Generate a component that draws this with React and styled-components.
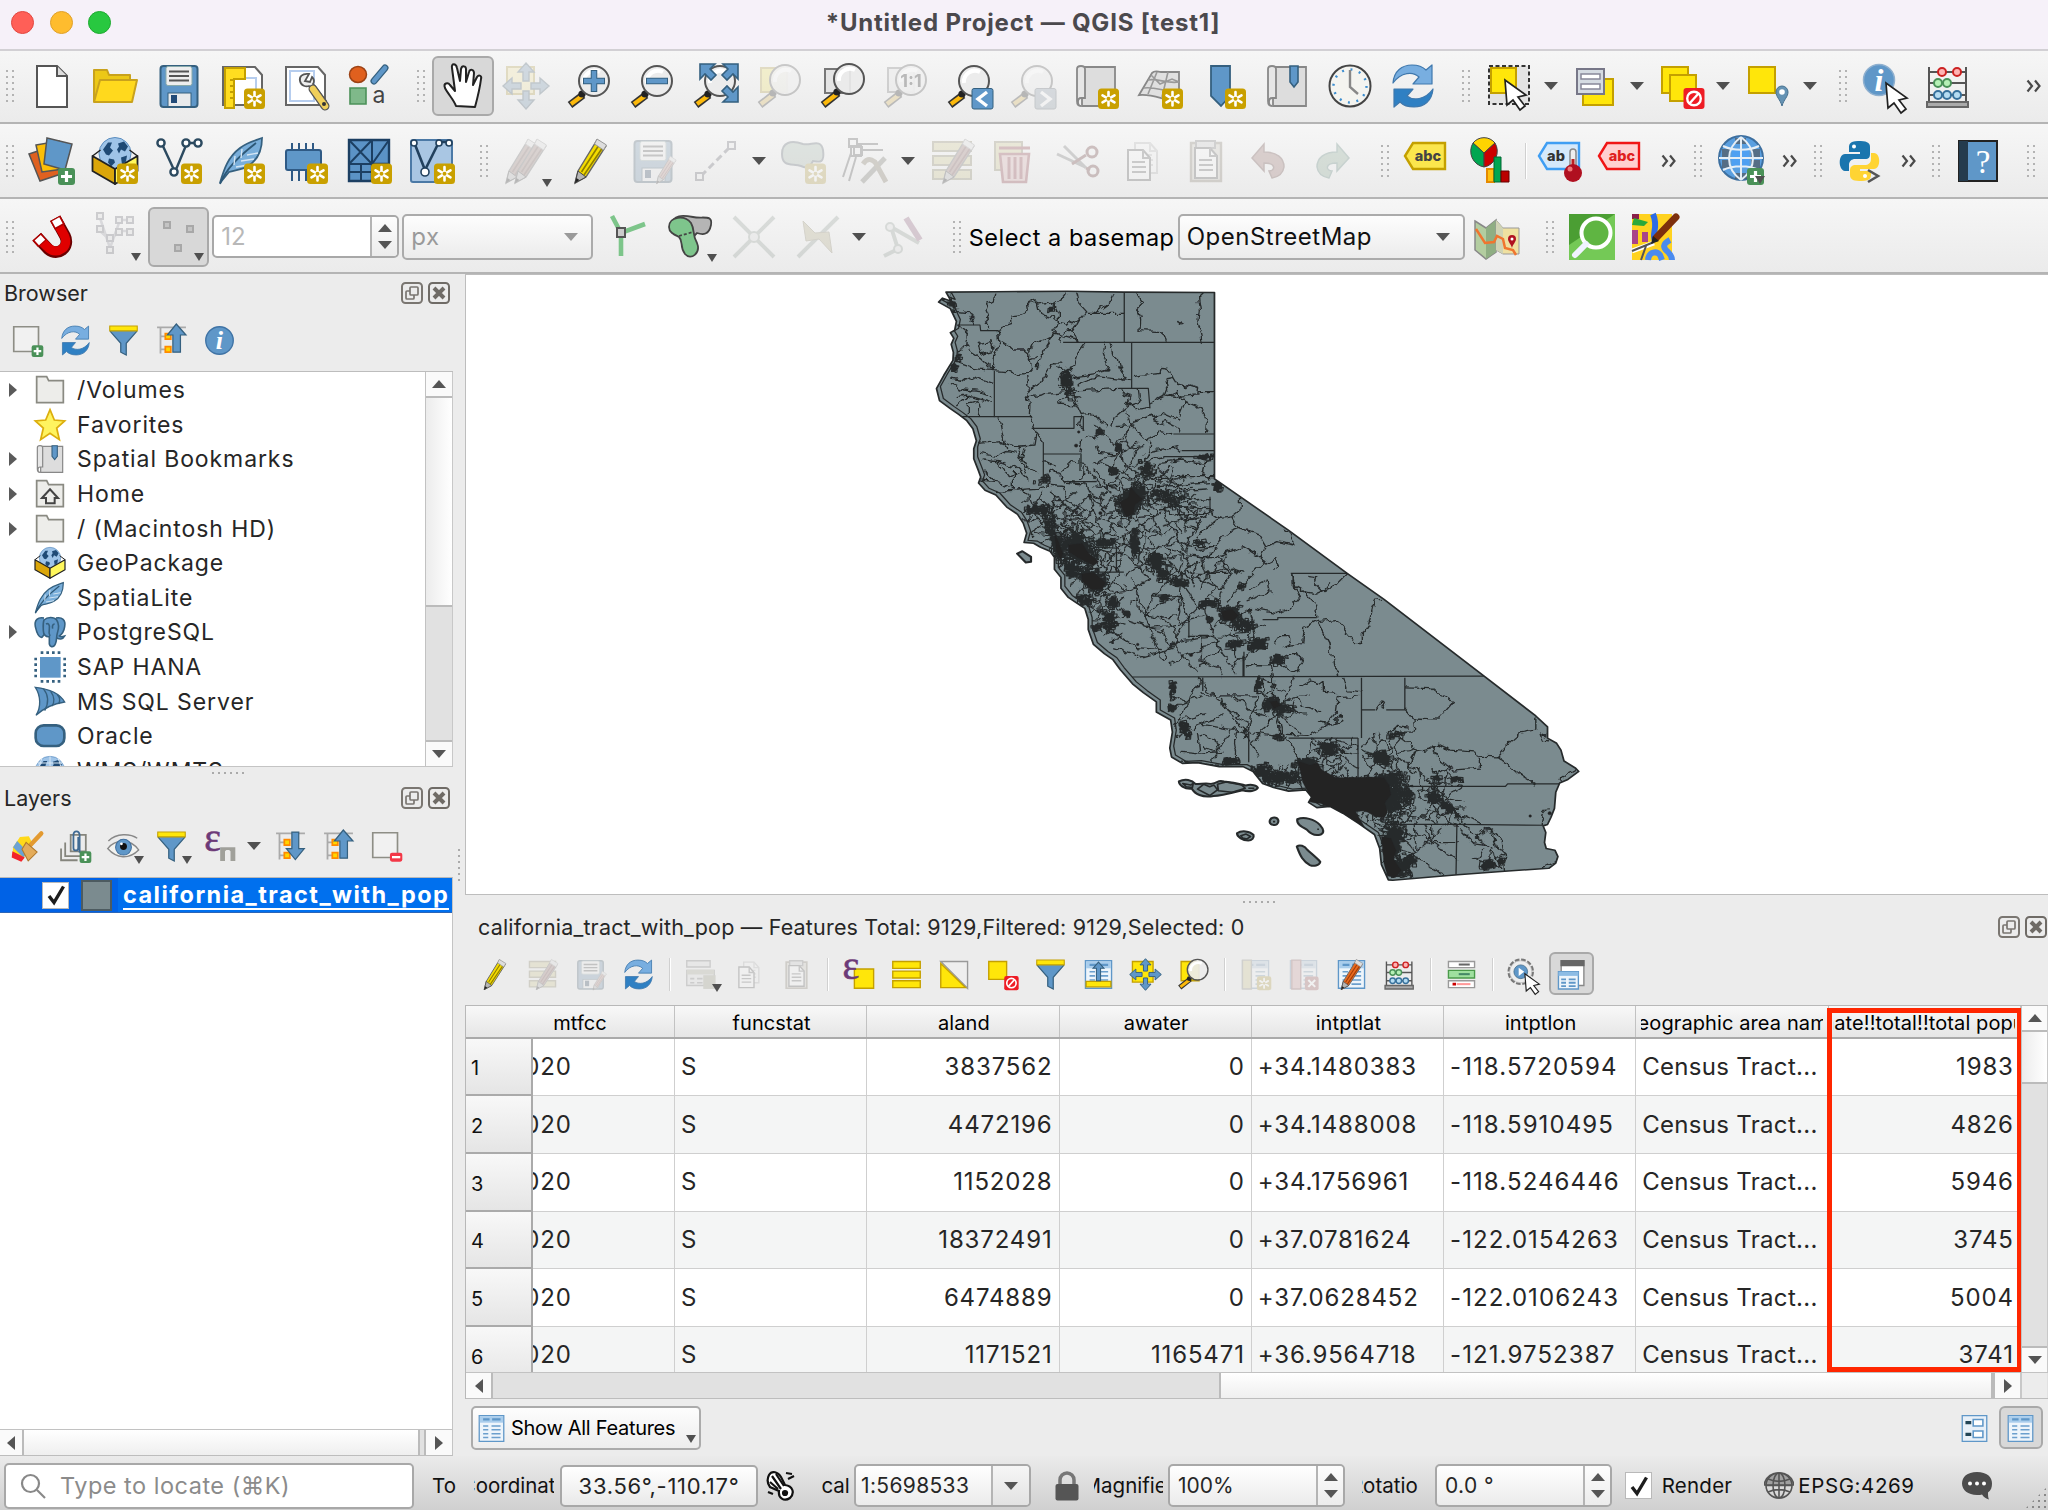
import React from "react";
import styled, { createGlobalStyle, css } from "styled-components";

const Global = createGlobalStyle`
  *{box-sizing:border-box}
  body{margin:0;background:#ececec;font-family:Inter,"Liberation Sans",sans-serif;color:#262626;overflow:hidden}
`;

/* ---------- layout ---------- */
const Window = styled.div`width:2048px;height:1510px;display:flex;flex-direction:column;background:#ececec;overflow:hidden`;
const TitleBar = styled.div`height:51px;flex:none;background:#f6f1f9;border-bottom:2px solid #d2d0d4;display:grid;grid-template-columns:1fr auto 1fr;align-items:center;padding:0 11px 5px`;
const Lights = styled.div`display:flex;gap:15.5px`;
const Light = styled.i`width:23px;height:23px;border-radius:50%;background:${p => p.$c};border:1px solid ${p => p.$b}`;
const Title = styled.div`font-weight:700;font-size:24px;letter-spacing:.8px;color:#4b494d;white-space:nowrap;transform:translateX(-1px)`;
const Bar = styled.div`height:${p => p.$h}px;flex:none;display:flex;align-items:center;background:linear-gradient(#f6f6f6,#ebebeb);border-bottom:2px solid #b4b4b4;white-space:nowrap;padding-bottom:${p => p.$pb || 0}px;padding-top:${p => p.$pt || 0}px`;
const Grip = styled.i`flex:none;margin-left:${p => p.$ml || 0}px;width:${p => p.$w || 21}px;height:36px;display:grid;justify-content:center;
  &::before{content:"";width:12px;height:36px;background:radial-gradient(circle,#b3b3b3 1px,transparent 1.5px) 0 0/6px 6px}`;
const Tool = styled.div`flex:none;width:${p => p.$w || 63.35}px;height:60px;display:grid;place-items:center;position:relative;
  svg{overflow:visible;${p => p.$dim && css`opacity:.27;filter:grayscale(.45)`}}
  ${p => p.$on && css`&::before{content:"";position:absolute;inset:0 ${p.$small ? "1.5px 1.5px" : "1px"};z-index:0;border:2px solid #a9a9a9;border-radius:6px;background:#d8d8d8}svg{z-index:1}`}
  ${p => p.$small && css`height:45px`}`;
const Corner = styled.i`position:absolute;right:${p => p.$r ?? 4}px;bottom:${p => p.$b ?? 4}px;border:5px solid transparent;border-top:8px solid #505050;border-bottom:0;z-index:2`;
const Drop = styled.i`flex:none;width:${p => p.$w || 23}px;padding-right:2px;display:grid;place-items:center;&::before{content:"";border:7px solid transparent;border-top:8px solid #505050;border-bottom:0}`;
const More = styled.div`flex:none;width:${p => p.$w}px;margin-left:${p => p.$auto ? "auto" : 0};display:grid;place-items:center`;
const VSep = styled.i`flex:none;width:2px;height:${p => p.$h}px;margin:0 ${p => p.$m}px;background:#fff;border-left:1px solid #d0d0d0`;
const Spin = styled.div`flex:none;width:${p => p.$w}px;height:43px;margin-left:${p => p.$ml || 0}px;border:2px solid #a8a8a8;border-radius:5px;background:${p => p.$plain ? "#fff" : "linear-gradient(#fff,#ebebeb)"};display:flex;font-size:${p => p.$fs || 21}px;color:${p => p.$c || "#262626"};align-items:center;padding-left:${p => p.$pl ?? 8}px;letter-spacing:${p => p.$ls || 0}px;white-space:nowrap`;
const SpinButtons = styled.div`margin-left:auto;height:100%;width:${p => p.$w || 27}px;flex:none;border-left:2px solid #b4b4b4;background:linear-gradient(#fdfdfd,#ececec);display:flex;flex-direction:column;align-items:center;justify-content:center;gap:9px;border-radius:0 4px 4px 0;
  &::before{content:"";border:7px solid transparent;border-bottom:8px solid #555;border-top:0}
  &::after{content:"";border:7px solid transparent;border-top:8px solid #555;border-bottom:0}`;
const ScaleDrop = styled.div`margin-left:auto;height:100%;width:38px;flex:none;border-left:2px solid #b4b4b4;display:grid;place-items:center;background:linear-gradient(#f6f6f6,#e2e2e2);border-radius:0 4px 4px 0;
  &::before{content:"";border:7px solid transparent;border-top:8px solid #555;border-bottom:0}`;
const Combo = styled.div`flex:none;width:${p => p.$w}px;height:46px;margin-left:${p => p.$ml || 0}px;border:2px solid #ababab;border-radius:5px;background:linear-gradient(#fdfdfd,#ececec);display:flex;align-items:center;justify-content:space-between;padding:0 13px 0 7px;font-size:24px;letter-spacing:.5px;color:${p => p.$c || "#111"};
  &::after{content:"";border:7px solid transparent;border-top:8px solid ${p => p.$c || "#555"};border-bottom:0}`;
const BarLabel = styled.div`flex:none;width:208px;padding:2px 0 0 1px;font-size:23.500px;letter-spacing:.5px;color:#000`;

const Body = styled.div`height:1182px;flex:none;display:flex`;
const Left = styled.div`width:453px;flex:none;display:flex;flex-direction:column`;
const VSplit = styled.div`width:12px;flex:none;display:flex;align-items:center;justify-content:center;
  &::before{content:"";width:4px;height:36px;background:radial-gradient(circle,#aaa 1px,transparent 1.5px) 0 0/4px 6px}`;
const HSplit = styled.div`height:${p => p.$h}px;flex:none;display:grid;place-items:center;padding-left:${p => p.$pl || 0}px;
  &::before{content:"";width:36px;height:4px;background:radial-gradient(circle,#aaa 1px,transparent 1.5px) 0 0/6px 4px}`;
const Right = styled.div`flex:1;min-width:0;display:flex;flex-direction:column`;
const DockHead = styled.div`height:${p => p.$h}px;flex:none;display:flex;align-items:center;justify-content:space-between;padding:0 ${p => p.$pr}px 1px ${p => p.$pl}px;font-size:21.5px;letter-spacing:${p => p.$ls || 0}px`;
const DockBtns = styled.div`display:flex;gap:5px`;
const SmallBar = styled.div`height:${p => p.$h}px;flex:none;display:flex;align-items:center;padding:0 0 3px ${p => p.$pl}px`;
const TreeBox = styled.div`flex:none;height:396px;border-top:1.5px solid #bdbdbd;border-bottom:1.5px solid #c4c4c4;display:flex;background:#fff;overflow:hidden`;
const Tree = styled.div`flex:1;padding-top:1px`;
const Row = styled.div`height:34.6px;display:flex;align-items:center;font-size:23px;letter-spacing:${p => p.$ls ?? .9}px;white-space:nowrap;
  svg{flex:none;overflow:visible;margin-right:11px}`;
const Tri = styled.i`flex:none;width:34px;padding-left:9px;&::before{content:"";display:${p => p.$show ? "block" : "none"};width:0;border:7px solid transparent;border-left:8px solid #5a5a5a;border-right:0}`;
const VScroll = styled.div`width:${p => p.$w || 28}px;flex:none;display:flex;flex-direction:column;border-left:1.5px solid #c2c2c2;border-right:1.5px solid #c8c8c8;background:#e1e1e1`;
const HScroll = styled.div`height:27px;flex:none;display:flex;border-top:1.5px solid #c2c2c2;border-bottom:1.5px solid #bdbdbd;background:#e1e1e1;border-right:${p => p.$br ? "1.5px solid #c4c4c4" : 0}`;
const ScrollBtn = styled.i`flex:none;${p => p.$v ? "height:26px" : css`width:${p.$w || 27}px`};display:grid;place-items:center;background:#fafafa;border:0 solid #bbb;
  ${p => ({ up: "border-bottom-width:2px", down: "border-top-width:2px", left: "border-right-width:2px", right: "border-left-width:2px" }[p.$d])};
  &::before{content:"";border:7px solid transparent;
  ${p => ({ up: "border-bottom:8px solid #555;border-top:0", down: "border-top:8px solid #555;border-bottom:0", left: "border-right:8px solid #555;border-left:0", right: "border-left:8px solid #555;border-right:0" }[p.$d])}}`;
const Handle = styled.i`flex:none;${p => p.$v ? `height:${p.$s}px;border-bottom:2px solid #bbb;background:linear-gradient(90deg,#ececec,#fff)` : `width:${p.$s}px;border-right:2px solid #bbb;background:${p.$trough ? "#e1e1e1" : "linear-gradient(#fff,#efefef)"}`}`;
const ScrollCorner = styled.i`width:27px;flex:none;background:#ececec;border-left:2px solid #c8c8c8`;
const Space = styled.i`flex:1`;
const LayerTree = styled.div`flex:1;border-top:1.5px solid #b9b9b9;border-right:1.5px solid #c4c4c4;background:#fff`;
const LayerRow = styled.div`height:35px;background:linear-gradient(90deg,#0062e6 118px,#0070ee 118px);border-bottom:1px solid #2a65b8;display:flex;align-items:center;padding-left:42px;color:#fff;font-weight:700;font-size:23.500px;letter-spacing:1.450px;overflow:hidden;white-space:nowrap`;
const Check = styled.i`flex:none;width:27px;height:27px;background:#fff;border:1.5px solid #b9b9b9;display:grid;place-items:center`;
const Swatch = styled.i`width:31px;height:31px;flex:none;background:#7b8b8f;border:2px solid #4d5b60;margin:0 11px 0 12px`;
const LayerName = styled.span`border-bottom:2px solid #fff;line-height:26px;padding-top:2px`;
const MapCanvas = styled.div`height:621px;flex:none;background:#fff;border:1.5px solid #bdbdbd;border-right:0;padding:0 0 0 454px;overflow:hidden;svg{display:block;margin-top:-5px}`;

const Table = styled.div`height:394px;flex:none;display:flex;flex-direction:column;border-top:1.5px solid #b8b8b8;border-left:1.5px solid #b8b8b8`;
const TableMid = styled.div`flex:1;min-height:0;display:flex`;
const GridArea = styled.div`flex:1;overflow:hidden;position:relative`;
const Highlight = styled.div`position:absolute;right:-1px;bottom:0;top:2px;width:195px;border:5px solid #ff2600`;
const HeadRow = styled.div`display:flex;height:32.5px;background:linear-gradient(#f8f8f8,#e6e6e6);border-bottom:2.5px solid #aaa`;
const HeadCell = styled.div`width:${p => p.$w || 192.25}px;flex:none;border-right:1.5px solid #c2c2c2;display:flex;justify-content:center;align-items:center;overflow:hidden;white-space:nowrap;font-size:20px;letter-spacing:.1px;color:#000;padding:4px 0 0 ${p => p.$pl || 0}px;margin:0`;
const HeadClip = styled.div`width:182px;overflow:hidden;display:flex;justify-content:center;padding-left:${p => p.$pl || 0}px;letter-spacing:${p => p.$ls || 0}px`;
const DataRow = styled.div`display:flex;height:57.7px;background:${p => p.$alt ? "#f4f5f5" : "#fff"}`;
const RowHead = styled.div`width:67px;flex:none;background:linear-gradient(#f8f8f8,#e5e5e5);border-right:2px solid #aaa;border-bottom:2.5px solid #aaa;padding:4px 0 0 5px;display:flex;align-items:center;font-size:20px;color:#111`;
const Cell = styled.div`width:${p => p.$w || 192.25}px;flex:none;border-right:1.5px solid #cfcfcf;border-bottom:1.5px solid #cfcfcf;padding:0 ${p => p.$r ? 6 : 0}px 1px 6px;display:flex;align-items:center;justify-content:${p => p.$r ? "flex-end" : "flex-start"};overflow:hidden;white-space:nowrap;font-size:24px;letter-spacing:${p => p.$ls ?? .85}px`;
const Pulled = styled.span`margin-left:-49px`;
const Footer = styled.div`height:57px;flex:none;display:flex;align-items:center;padding:1px 4px 0 6px`;
const ShowBtn = styled.div`position:relative;width:230px;height:44px;border:2px solid #ababab;border-radius:5px;background:linear-gradient(#fdfdfd,#ededed);display:flex;align-items:center;gap:4px;padding-left:3px;font-size:20px;letter-spacing:-.3px;color:#000;white-space:nowrap;svg{flex:none}`;

const Status = styled.div`flex:1;display:flex;align-items:center;background:linear-gradient(#ebebeb,#d0d0d0);padding:5px 0 0 4px;font-size:20.5px;color:#222;white-space:nowrap`;
const Search = styled.div`width:410px;height:46px;flex:none;border:2px solid #a8a8a8;border-radius:5px;background:#fff;display:flex;align-items:center;gap:14px;padding-left:14px;font-size:23.500px;color:#8b8b8b;letter-spacing:.5px`;
const Clip = styled.div`flex:none;width:${p => p.$w}px;margin-left:${p => p.$ml}px;overflow:hidden;display:flex;justify-content:center;letter-spacing:${p => p.$ls || 0}px;color:#111`;
const Field = styled.div`flex:none;width:198px;height:42px;margin-left:6px;border:2px solid #a8a8a8;border-radius:5px;background:linear-gradient(#fff,#e9e9e9);display:grid;place-items:center;font-size:22px;letter-spacing:.7px`;
const Spot = styled.div`flex:none;width:${p => p.$w}px;margin-left:${p => p.$ml}px;display:grid;place-items:center`;
const SizeGrip = styled.i`align-self:flex-end;margin-left:auto;width:24px;height:24px;background:radial-gradient(circle,#888 1px,transparent 1.5px) 0 0/6px 6px;clip-path:polygon(100% 0,100% 100%,0 100%)`;

/* ---------- icon pieces ---------- */
const Y = "#ffe60a", YB = "#c4a000", B = "#5f97c8", BD = "#35607f";
const T = (p) => <text fontFamily="Inter,sans-serif" textAnchor="middle" {...p} />;
const StarBadge = () => <g><rect x="26" y="26.5" width="21" height="20.5" rx="3.5" fill="#c9a000" stroke="none" /><path d="M36.5 30v13.500M30.500 33.300l12 7M42.500 33.300l-12 7" stroke="#fff" strokeWidth="2.600" strokeLinecap="round" /><circle cx="36.500" cy="36.800" r="2" fill="#c9a000" stroke="none" /></g>;
const PlusBadge = () => <g><rect x="30" y="31" width="17" height="17" rx="3" fill="#4a9158" /><path d="M38.500 34v11M33 39.500h11" stroke="#fff" strokeWidth="3.200" /></g>;
const NoBadge = () => <g><rect x="26.500" y="26" width="21" height="21" rx="3" fill="#ee1c25" stroke="none" /><circle cx="37" cy="36.500" r="6.800" fill="none" stroke="#fff" strokeWidth="2.400" /><path d="M32.500 41.500l9-10" stroke="#fff" strokeWidth="2.400" /></g>;
const Lens = ({ x = 28, y = 19 }) => <g><path d={`M4 43L${x - 11} ${y + 14}`} stroke="#333" strokeWidth="7.500" /><path d={`M5 42L${x - 12} ${y + 15}`} stroke="#fcb90b" strokeWidth="4.200" /><circle cx={x - 12} cy={y + 13} r="3.600" fill="#222" /><circle cx={x} cy={y} r="15" fill="#ebeceb" fillOpacity=".92" stroke="#555" strokeWidth="2" /><path d={`M${x - 10} ${y + 2}a11 11 0 0 1 16-11`} stroke="#fff" strokeWidth="4" fill="none" /></g>;
const Pencil = ({ c = "#f4dc00", d = "#8f7d00", dx = 0 }) => <g transform={`translate(${dx} 0)`}><path d="M9 46l3-12L31 3l9 6-20 31z" fill={c} stroke="#666" strokeWidth="1.400" /><path d="M15.500 35L33 8M18 38L37 10" stroke={d} strokeWidth="1.600" /><path d="M28.500 7L31 2l9.500 6-3 5z" fill="#ddd" stroke="#999" /><path d="M9 46l3-12 8 6z" fill="#b5b5b5" stroke="#444" /><path d="M9 46l1.400-5 3 2z" fill="#222" /></g>;
const Floppy = () => <g><rect x="5.500" y="4" width="37" height="41" rx="3" fill={B} stroke={BD} strokeWidth="2" /><rect x="11" y="4.500" width="26" height="19" rx="2" fill="#eee" stroke="#8aa" /><path d="M14 9.500h20M14 14h20M14 18.500h20" stroke="#555" strokeWidth="2" /><rect x="13" y="31" width="23" height="13.500" fill="#e8eaec" stroke={BD} /><path d="M16 33h6v8h-6z" fill="#224b78" /></g>;
const Cursor = ({ x = 0, y = 0 }) => <path transform={`translate(${x} ${y})`} d="M0 0l2 25 6-5 7 10 5-4-7-9 8-2z" fill="#fff" stroke="#222" strokeWidth="1.700" />;
const Paper = ({ c = "#666" }) => <path d="M5 5h32l7 8v30H5z" fill="#fff" stroke={c} strokeWidth="2" />;
const FourArrows = ({ c = B, k = BD }) => <g fill={c} stroke={k} strokeWidth="1.400"><path d="M24 1l8 9h-5v9h-6v-9h-5zM24 47l8-9h-5v-9h-6v9h-5zM1 24l9-8v5h9v6h-9v5zM47 24l-9-8v5h-9v6h9v5z" /></g>;
const Sheet = ({ x, y }) => <g transform={`translate(${x} ${y})`}><path d="M0 0h15l7 8v22H0z" fill="#fafafa" stroke="#555" strokeWidth="2" /><path d="M15 0v8h7M4 12h13M4 17h14M4 22h14" fill="none" stroke="#666" strokeWidth="2" /></g>;
const Globe = ({ cx, cy, r }) => <g><circle cx={cx} cy={cy} r={r} fill="#9fc4e8" stroke="#5b8dbf" /><g transform={`translate(${cx} ${cy}) scale(${r / 16})`} fill="#1f4a75"><path d="M-12-4l5-7 4 0-2 5 3 3-4 5-3-1zM-6 5l5 1 1 3-4 4-3-4zM3-10l6-2 4 5-3 5-4-2-2 4-2-4 2-3zM6 4l6-2-1 6-4 3z" /></g></g>;
const Box3D = () => <g strokeLinejoin="round"><Globe cx={24} cy={16.500} r={16} /><path d="M1.500 19L24 32v15L1.500 34z" fill="#dba60a" stroke="#222" strokeWidth="1.800" /><path d="M46.500 19L24 32v15l22.500-13z" fill="#fff75c" stroke="#222" strokeWidth="1.800" /><path d="M1.500 19l8-6M46.500 19l-8-6" stroke="#222" strokeWidth="1.500" /></g>;
const Feather = () => <g><path d="M2 46C6 32 10 20 22 11 30 5 36 4 44 1c0 12-4 22-14 28-6 4-14 4-19 6z" fill="#79aeda" stroke={BD} strokeWidth="1.800" /><path d="M2 47C8 32 20 20 38 6" stroke="#2d5877" strokeWidth="1.800" fill="none" /><path d="M18 30l12-2M23 24l13-2M29 18l11-2M17 19l-1 9M24 12l-1 9" stroke="#d5e6f4" strokeWidth="1.400" fill="none" /></g>;
const VShape = () => <g fill="#fff" stroke="#2c4a60" strokeWidth="2.400"><path d="M7 7l13 28L32 6h11" fill="none" /><circle cx="6" cy="6" r="3.600" /><circle cx="31" cy="6" r="3.600" /><circle cx="43" cy="6" r="3.600" /><circle cx="19" cy="35" r="3.600" /></g>;
const Funnel = () => <g><path d="M5 6h38v5L28 28v17l-8-4V28L5 11z" fill={B} stroke={BD} strokeWidth="1.800" /><path d="M4 3h40v7H4z" fill={Y} stroke={YB} strokeWidth="1.500" /></g>;
const TreeLines = ({ down }) => <g><path d="M3 5h42M8 5v38M8 18h10M8 37h10" stroke="#aaa" strokeWidth="2.600" fill="none" /><path d="M15 14h8v8h-8zM15 33h8v8h-8z" fill="#ffd600" stroke="#ff8a00" strokeWidth="2.500" />{down ? <path d="M26 3h10v24h8L31 43 18 27h8z" fill={B} stroke={BD} strokeWidth="1.800" /> : <path d="M31 0l14 16h-8v25h-11V16h-8z" fill={B} stroke={BD} strokeWidth="1.800" />}</g>;
const GridSheet = () => <g><path d="M5 4h38v40H5z" fill="#eef5fb" stroke={B} strokeWidth="2" /><path d="M6 5h36v10H6z" fill="#a9cdec" /><path d="M11 10h10M25 10h13" stroke={B} strokeWidth="3.600" /><path d="M11 20h8M24 20h14M11 26h8M24 26h14M11 32h8M24 32h14M11 38h8M24 38h14" stroke="#6b9fcd" strokeWidth="2.400" /></g>;
const TableRows = () => <g fill="#d8cb66" stroke="#8f8650" strokeWidth="2"><path d="M5 5h38v9H5zM5 19h38v9H5zM5 33h38v9H5z" /></g>;
const MapRoll = () => <g><path d="M8 5h35v39H10V10z" fill="#ddd" stroke="#888" strokeWidth="1.800" /><path d="M5 7c0-4 8-4 8 0v29H9c-4 0-4 8 0 8-3 0-4-2-4-5z" fill="#e6e6e6" stroke="#888" strokeWidth="1.800" /></g>;
const LabelTag = ({ s, f, t, c, x = 26 }) => <g transform="translate(-1 0)"><path d="M3 19L11 6h32v26H11z" fill={f} stroke={s} strokeWidth="2.400" /><T x={x} y="24" fontSize="14.500" fontWeight="800" fill={c}>{t}</T></g>;

const icons = {
  doc: <g fill="#fff" stroke="#555" strokeWidth="2"><path d="M9 4h20l10 10v31H9z" /><path d="M29 4v10h10" fill="#ddd" /></g>,
  folder: <g stroke="#c9a21c" strokeWidth="2" strokeLinejoin="round"><path d="M3 40V8h13l2 5h21v8" fill="#ecc817" /><path d="M3 40L9 18h37l-5 22z" fill="#ffd91d" /></g>,
  save: <Floppy />,
  newLayout: <g><Paper /><path d="M22 16h16v20" stroke="#b6cdee" strokeWidth="2" fill="none" /><path d="M7 6h20v11H16v29H7z" fill="#ffdd20" stroke={YB} strokeWidth="2" /><path d="M12 18h4M12 24h4M12 30h4M12 36h4" stroke={YB} strokeWidth="2" /><StarBadge /></g>,
  layoutMgr: <g><Paper /><path d="M9 9h24v30H9z" fill="none" stroke="#b6cdee" strokeWidth="2" /><path d="M28 12c-7-1-10 3-9 7 1 5 6 6 9 5l12 18c2 3 6 0 5-3L32 22c2-3 0-6-1-7l-2 5-5-1z" fill="#eee" stroke="#555" strokeWidth="1.800" /><path d="M32 27l12 17" stroke="#555" strokeWidth="9" strokeLinecap="round" /><path d="M32 27l12 17" stroke="#f0cf5b" strokeWidth="6.500" strokeLinecap="round" /><circle cx="43" cy="42" r="2" fill="#333" /></g>,
  style: <g><ellipse cx="13" cy="12.500" rx="8.500" ry="8" fill="#e0601e" stroke="#9c4215" strokeWidth="1.500" /><path d="M29 19L40 6" stroke={BD} strokeWidth="7" strokeLinecap="round" /><path d="M29 19L40 6" stroke={B} strokeWidth="4.500" strokeLinecap="round" /><path d="M5 26h16v16H5z" fill="#7fb98a" stroke="#4c9159" strokeWidth="1.600" /><T x="34" y="41" fontSize="23" fill="#444">a</T></g>,
  hand: <path d="M17 44c-2-6-8-12-11-18-2-5 3-6 5-3l5 6L13 6c-1-5 4-5 5 0l3 13 1-12c1-4 5-3 5 0v13l3-10c1-4 5-2 5 1l-1 12 4-8c2-3 5-1 4 2-1 8-3 17-6 28z" fill="#fff" stroke="#222" strokeWidth="2" strokeLinejoin="round" />,
  panSel: <g><path d="M5 5h27v27H5z" fill="#ffe66b" stroke={YB} strokeWidth="2" /><FourArrows /></g>,
  zoomIn: <g><Lens /><path d="M28 8v22M17 19h22" stroke={BD} strokeWidth="6.500" /><path d="M28 9v20M18 19h20" stroke={B} strokeWidth="4.600" /></g>,
  zoomOut: <g><Lens /><path d="M17 19h22" stroke={BD} strokeWidth="6.500" /><path d="M18 19h20" stroke={B} strokeWidth="4.600" /></g>,
  zoomFull: <g><Lens /><g fill={B} stroke={BD} strokeWidth="1.600"><path d="M8 2h15l-5 5 6 6-5 5-6-6-5 5zM46 2H31l5 5-6 6 5 5 6-6 5 5zM46 40H31l5-5-6-6 5-5 6 6 5-5z" /></g></g>,
  zoomSel: <g><path d="M5 6h26v24H5z" fill={Y} stroke={YB} strokeWidth="2" /><Lens x={29} y={18} /></g>,
  zoomLayer: <g><path d="M6 7h25v24H6z" fill="#e4e4e4" stroke="#777" strokeWidth="2" /><Lens x={30} y={17} /></g>,
  zoomNative: <g><path d="M6 6h26v24H6z" fill="#e4e4e4" stroke="#777" strokeWidth="2" /><Lens x={29} y={18} /><T x="29" y="25" fontSize="18" fontWeight="700" fill="#222">1:1</T></g>,
  zoomLast: <g><Lens /><rect x="26" y="26.500" width="21" height="20.500" rx="2" fill={B} stroke={BD} /><path d="M41 30l-9 7 9 7" stroke="#fff" strokeWidth="3.400" fill="none" /></g>,
  zoomNext: <g><Lens /><rect x="26" y="26.500" width="21" height="20.500" rx="2" fill="#86a0b8" stroke="#567" /><path d="M32 30l9 7-9 7" stroke="#fff" strokeWidth="3.400" fill="none" /></g>,
  newMap: <g><MapRoll /><StarBadge /></g>,
  new3d: <g><path d="M3 33L16 11c3-3 6-1 9-1h18v29c-12 1-26-8-40-6z" fill="#e0e0e0" stroke="#888" strokeWidth="1.800" /><path d="M12 18c10-2 18 4 31 2M8 26c12-2 22 5 35 3M21 10l-9 22M32 10l-6 25M15 13l9 9 12-5 7 3" fill="none" stroke="#999" strokeWidth="1.600" /><StarBadge /></g>,
  newBm: <g><path d="M12 4h19v30l-9 10-10-10z" fill={B} stroke={BD} strokeWidth="1.800" /><StarBadge /></g>,
  bookmarks: <g><MapRoll /><path d="M27 4h8v16l-4 5-4-5z" fill={B} stroke={BD} strokeWidth="1.600" /></g>,
  clock: <g><circle cx="24" cy="24" r="20.500" fill="#f4f4f0" stroke="#444" strokeWidth="2" /><circle cx="24" cy="24" r="16.500" fill="none" stroke="#3f8fd0" strokeWidth="2.400" strokeDasharray="2 6.640" /><path d="M24 8v17l8 7" stroke="#888" strokeWidth="2.400" fill="none" /></g>,
  refresh: <g stroke="#3f78ad" strokeWidth="1.200" strokeLinejoin="round"><path d="M4 21C5 9 13 3 23 3c7 0 11 2 14 5l6-5v19H24l6-7C24 9 12 10 4 21z" fill="#78aee0" /><path d="M44 27c-1 12-9 18-19 18-7 0-11-2-14-5l-6 5V27h19l-6 7c6 5 18 4 26-7z" fill="#2f80c3" /></g>,
  select: <g><path d="M4 4h40v38H4z" fill="#e3e3e3" stroke="#333" strokeWidth="2" strokeDasharray="4 2.500" /><path d="M6 6h25v25H6z" fill={Y} stroke={YB} strokeWidth="2" /><Cursor x={20} y={18} /></g>,
  selForm: <g><path d="M12 17h30v26H12z" fill={Y} stroke={YB} strokeWidth="2" /><path d="M6 7h27v25H6z" fill="#d5dbe2" stroke="#778" strokeWidth="2" /><path d="M10 12h19v5H10zM10 22h19v5H10z" fill="#fff" stroke="#889" strokeWidth="1.500" /></g>,
  deselect: <g fill={Y} stroke={YB} strokeWidth="2"><path d="M5 5h26v26H5z" /><path d="M13 13h26v26H13z" /><NoBadge /></g>,
  selLoc: <g><path d="M5 5h26v26H5z" fill={Y} stroke={YB} strokeWidth="2" /><path d="M38 44c-2-7-6-9-6-14a6 6 0 0 1 12 0c0 5-4 7-6 14z" fill="#6593b4" stroke="#46708f" /><circle cx="38" cy="30" r="2.800" fill="#fff" /></g>,
  identify: <g><circle cx="18" cy="18" r="15.500" fill={B} stroke="#8fb0cf" strokeWidth="1.500" /><T x="18" y="29" fontSize="32" fontStyle="italic" fontWeight="700" fontFamily="Liberation Serif,serif" fill="#fff">i</T><Cursor x={25} y={21} /></g>,
  info: <g><circle cx="24" cy="24" r="20" fill={B} stroke="#3f73a5" strokeWidth="2" /><T x="24" y="37" fontSize="38" fontStyle="italic" fontWeight="700" fontFamily="Liberation Serif,serif" fill="#fff">i</T></g>,
  abacus: <g strokeWidth="2" stroke="#666"><path d="M5 5v37M42 5v37M5 10h37M5 21h37M5 33h37" stroke="#555" /><path d="M3 40h41v5H3z" fill="#aaa" /><g fill="#ffb3b3" stroke="#c22"><circle cx="18" cy="10" r="4" /><circle cx="33" cy="10" r="4" /></g><g fill="#b6f0b6" stroke="#4a9158"><circle cx="14" cy="21" r="4" /><circle cx="23" cy="21" r="4" /></g><g fill="#b5dcf2" stroke="#37719c"><circle cx="14" cy="33" r="4" /><circle cx="23" cy="33" r="4" /><circle cx="33" cy="33" r="4" /></g></g>,
  dsm: <g stroke="#555" strokeWidth="1.500"><path d="M1 17l21-7 11 27-21 7z" fill="#df6120" /><path d="M8 8l23-4 4 28-21 3z" fill="#fbbe07" /><path d="M19 1l25 6-7 26-21-6z" fill={B} /><g stroke="none"><PlusBadge /></g></g>,
  gpkg: <g><Box3D /><StarBadge /></g>,
  box: <Box3D />,
  shp: <g><VShape /><StarBadge /></g>,
  spatialite: <g><Feather /><StarBadge /></g>,
  feather: <Feather />,
  mem: <g><path d="M11 6v38M18 6v38M25 6v38M32 6v38" stroke="#2f5a85" strokeWidth="2" /><rect x="5" y="13" width="35" height="20" rx="2" fill={B} stroke="#2f5a85" strokeWidth="2" /><StarBadge /></g>,
  mesh: <g><path d="M4 3h40v24H27v17H4z" fill="#5b93c6" stroke="#1c3f62" strokeWidth="2.400" /><path d="M4 3l23 24M27 3L4 27M27 3v24L44 3M4 27h23M16 27v17M4 35h23" stroke="#1c3f62" strokeWidth="2" /><StarBadge /></g>,
  virt: <g><rect x="3" y="3" width="41" height="42" rx="2" fill="#a9c6e3" stroke="#4b79a6" strokeWidth="2" /><path d="M6 5l11 28L31 5h11" stroke="#22415e" strokeWidth="2.600" fill="none" /><g fill="#fff" stroke="#22415e" strokeWidth="1.600"><circle cx="6" cy="6" r="3" /><circle cx="31" cy="6" r="3" /><circle cx="41" cy="6" r="3" /><circle cx="17" cy="35" r="4" /></g><StarBadge /></g>,
  pencils: <g><Pencil dx={-5} c="#a8796e" d="#7d5048" /><Pencil dx={4} c="#a8796e" d="#7d5048" /></g>,
  pencil: <Pencil />,
  saveEdit: <g><Floppy /><g transform="translate(22 18) scale(.62)"><Pencil c="#d09080" d="#955" /></g></g>,
  digitize: <g fill="#eee" stroke="#667" strokeWidth="2"><path d="M9 39L39 9" strokeWidth="3" strokeDasharray="7 4" /><path d="M4 36h7v7H4zM36 5h7v7h-7z" /></g>,
  polygonNew: <g><path d="M3 17C3 5 12 3 24 7c8 2 18-6 20 6 2 14-4 12-10 11-4 8-8 7-12 5-8-3-19 2-19-12z" fill="#9dbda6" stroke="#567" strokeWidth="2" /><StarBadge /></g>,
  vertex: <g stroke="#555" strokeWidth="2" fill="none"><path d="M9 9h10v10H9zM16 7h20M18 13h23M9 16L1 40M14 20L7 44" /><path d="M7 2h8v8H7zM12 10h8v8h-8z" /><path d="M20 45l23-24" stroke="#776" strokeWidth="5" /><path d="M21 27c5-7 9-4 12-2L44 45" stroke="#875" strokeWidth="5" /></g>,
  modAttr: <g><TableRows /><g transform="translate(6 0)"><Pencil c="#b07468" d="#844" /></g></g>,
  del: <g><path d="M3 5h27v28H3z" fill="#d8cb66" stroke="#8f8650" strokeWidth="2" /><path d="M8 17h29l-3 28H11z" fill="#f2a8a8" stroke="#c03040" strokeWidth="2.600" /><path d="M7 11h31M17 20v22M23 20v22M29 20v22" stroke="#c03040" strokeWidth="3" /></g>,
  cut: <g fill="none" stroke="#833" strokeWidth="3"><path d="M2 17l28 13M9 9l22 22" stroke="#777" strokeWidth="3" /><circle cx="37" cy="15" r="5" /><circle cx="38" cy="34" r="5" /><path d="M31 18L17 27M31 31l4 2" /></g>,
  copy: <g><g opacity=".4"><Sheet x={17} y={6} /></g><Sheet x={10} y={13} /></g>,
  paste: <g><path d="M9 6h30v38H9z" fill="#cfc8b5" stroke="#8a7c60" strokeWidth="2.400" /><path d="M14 4h19v7H14z" fill="#ccc" stroke="#777" strokeWidth="2" /><Sheet x={13} y={11} /></g>,
  undo: <path transform="translate(5 1)" d="M2 20L14 6v8c13 0 20 6 20 15-1 7-6 10-12 11l-3-7c6 0 8-8-5-8v8z" fill="#b36a63" stroke="#7c403a" strokeWidth="1.500" />,
  redo: <path transform="translate(-6 1)" d="M46 20L34 6v8c-13 0-20 6-20 15 1 7 6 10 12 11l3-7c-6 0-8-8 5-8v8z" fill="#79b088" stroke="#487" strokeWidth="1.500" />,
  label: <LabelTag s={YB} f="#fbe64d" t="abc" c="#444" />,
  labelBlue: <g><LabelTag s="#3f9ef3" f="#d5e9fb" t="ab" c="#333" x={20} /><path d="M33 15c0-4 6-4 6 0v16h-6z" fill="#eee" stroke="#888" strokeWidth="1.500" /><path d="M36 22v12" stroke="#b22" strokeWidth="3" /><circle cx="36" cy="36" r="9" fill="#b01020" /><circle cx="33" cy="32" r="2.500" fill="#e77" /></g>,
  labelRed: <LabelTag s="#f01515" f="#ffd0d0" t="abc" c="#e02020" />,
  diagram: <g stroke="#444" strokeWidth="1"><path d="M18 16L7 6a14 14 0 0 1 22 0z" fill="#ffd400" /><path d="M18 16L7 6a16 16 0 0 0 11 24z" fill="#00a651" /><path d="M18 16L29 6a16 16 0 0 1-11 24z" fill="#c00" /><path d="M21 32h7v13h-7z" fill="#ffc20e" stroke="#e58a00" strokeWidth="2" /><path d="M28 20h7v25h-7z" fill="#00a651" stroke="#063" /><path d="M35 34h8v11h-8z" fill="#b00" stroke="#600" /></g>,
  web: <g><circle cx="23" cy="21" r="22" fill="#5a9fe0" stroke="#3d6f9f" strokeWidth="2" /><path d="M4 12h8v8H4zM33 12h9v8h-9zM4 23h8v8H4zM33 23h9v8h-9zM17 1h11v6H17zM17 36h12v6H17zM14 12h16v8H14z" fill="#555" opacity=".65" /><path d="M14 12h17v19H14z" fill="#4fa0f2" /><path d="M23 0v43M1 21h44M5 9c10 5 26 5 36 0M5 33c10-5 26-5 36 0M23 0c-16 12-16 31 0 43M23 0c16 12 16 31 0 43" stroke="#e6eef5" strokeWidth="2" fill="none" /><g transform="translate(-1 0)"><PlusBadge /></g></g>,
  python: <g transform="translate(-1 1)"><path d="M22 3c-9 0-9 4-9 7v4h11v2H9c-7 0-7 16 0 17h4v-6c0-4 3-6 6-6h10c4 0 5-2 5-5V9c0-5-4-6-12-6z" fill="#1a75ae" /><path d="M26 43c9 0 9-4 9-7v-3H24v-2h14c7 0 7-16 0-16h-3v6c0 4-3 6-6 6H20c-4 0-6 2-6 5v5c0 5 4 6 12 6z" fill="#ffd433" /><circle cx="18" cy="8.500" r="2" fill="#fff" /><circle cx="29" cy="38" r="2" fill="#fff" /><path d="M32 32l10 6-10 6" fill="none" stroke="#555" strokeWidth="2.600" /></g>,
  help: <g transform="translate(-1 0)"><path d="M5 4h38v40H5z" fill={B} stroke="#222" strokeWidth="2" /><path d="M5 4h9v40H5z" fill="#243b4d" /><T x="29" y="36" fontSize="33" fontFamily="Liberation Serif,serif" fill="#fff">?</T></g>,
  magnet: <g fill="none" transform="translate(0 -2.500) scale(.97)"><path d="M28 8L38 26C44 38 31 48 21 40L9 27" stroke="#6a0000" strokeWidth="12" /><path d="M28 9L37.500 26C43 37 31 46.500 21.500 39L10 28" stroke="#e00000" strokeWidth="9.500" /><path d="M28 8l5 9M9 27l6 7" stroke="#b00000" strokeWidth="12" /><path d="M28.500 9l3.500 6.500M10 28l4.500 5" stroke="#fff" strokeWidth="8.500" /></g>,
  snapV: <g fill="#ddd" stroke="#667" strokeWidth="2" transform="translate(3 -1)"><path d="M6 6l10 30 10-28h11M6 19l10 9 10-9h11" fill="none" strokeWidth="2.600" stroke="#99a" /><path d="M3 1h6v6H3zM3 14h6v6H3zM22 5h6v6h-6zM33 5h6v6h-6zM22 17h6v6h-6zM33 17h6v6h-6zM13 23h6v6h-6zM13 35h6v6h-6z" /></g>,
  snapSq: <g fill="#c4c4c4" stroke="#a8a8a8" strokeWidth="2"><path d="M9 9h6v6H9zM32 13h6v6h-6zM20 32h6v6h-6z" /></g>,
  topo: <g transform="translate(3 0)"><path d="M7 3l9 17 24-9M16 21v22" stroke="#7dc58a" strokeWidth="4.600" fill="none" /><path d="M12 15h8v9h-8z" fill="#ccc" stroke="#555" strokeWidth="2" /></g>,
  overlap: <g stroke="#444" strokeWidth="1.800"><path d="M4 13C6 1 16 2 26 4c10 2 20-3 18 8-2 10-8 10-14 8l-10 10z" fill="#b5b5b5" /><path d="M2 14C2 3 18 2 24 10c4 7 1 11 6 20 4 10-6 18-12 11-6-8-1-12-6-17C6 21 2 19 2 14z" fill="#7ec58c" /><path d="M12 23l14-4" strokeDasharray="3 2" /></g>,
  crossX: <g stroke="#8a9e90" strokeWidth="4"><path d="M4 4l40 40M44 4L4 44" /><circle cx="24" cy="24" r="5" fill="#ddd" strokeWidth="2" /></g>,
  bolt: <g><path d="M44 4L4 44" stroke="#8a9e90" strokeWidth="4" /><path d="M9 8l12 12 14-1 3 21-13-14-13 2z" fill="#b8a965" stroke="#8d8150" /></g>,
  trace: <g stroke="#8a9e90" strokeWidth="4" fill="#ddd"><path d="M12 14l28 16M12 14l7 22-14 7" fill="none" /><circle cx="11" cy="14" r="4" strokeWidth="2" /><circle cx="19" cy="36" r="4" strokeWidth="2" /><path d="M27 5l14 22" stroke="#a58" strokeWidth="6" /></g>,
  basemap: <g transform="translate(1 0)"><path d="M2 8l11 7 10-8v32l-10 7L2 37z" fill="#b3cda0" stroke="#888" strokeWidth="1.500" /><path d="M13 15l10-8v32l-10 7z" fill="#8fae83" /><path d="M23 7l7 8h16v26H30l-7-4z" fill="#efe0a0" stroke="#999" /><path d="M23 7l7 8v26l-7-4z" fill="#cfd3b4" /><path d="M3 16l9 14 9-1 3-6 6 3 2 9 8 2 3 5" fill="none" stroke="#f0752f" strokeWidth="2.500" /><path d="M39 35c-1-4-4-6-4-9a4 4 0 0 1 8 0c0 3-3 5-4 9z" fill="#b01020" /><circle cx="39" cy="26" r="1.500" fill="#fff" /></g>,
  qms: <g><path d="M1 1h46v46H1z" fill="#74c956" /><path d="M1 1h46L1 32z" fill="#4b9e33" /><circle cx="28" cy="20" r="14.500" fill="#5fb542" stroke="#fff" strokeWidth="4" /><path d="M18 31L7 42" stroke="#f0f3ff" strokeWidth="6" strokeLinecap="round" /></g>,
  osm: <g><path d="M1 1h40v46H1z" fill="#ffd21f" /><path d="M1 1h7v5H1z" fill="#8a1f4a" /><path d="M3 5l14 4-4 4-12-1z" fill="#2ba83a" /><path d="M1 17h6v14H1zM11 19h6v10h-6z" fill="#a94389" /><path d="M22 1c6 14-2 20 2 26" stroke="#2d6be5" strokeWidth="6" fill="none" /><path d="M17 47c1-9 9-9 12-5l2 5M39 27c-8 4-7 8-2 12 3 3 4 6 4 8" stroke="#4b8bef" strokeWidth="6" fill="none" /><path d="M1 38l22-8" stroke="#fff" strokeWidth="5" /><path d="M1 38l22-9M10 47l5-14" stroke="#555" strokeWidth="2" fill="none" /><path d="M25 25L45 4" stroke="#7d2f0c" strokeWidth="7" strokeLinecap="round" /><path d="M20 31l2-8 6 5z" fill="#222" /></g>,
  addLayer: <g><path d="M4 4h36v36H4z" fill="#f1f1f1" stroke="#8e8e86" strokeWidth="2.400" /><PlusBadge /></g>,
  removeLayer: <g><path d="M4 4h36v36H4z" fill="#f1f1f1" stroke="#8e8e86" strokeWidth="2.400" /><rect x="29" y="33" width="18" height="13" rx="3" fill="#f33747" /><path d="M32 39.500h12" stroke="#fff" strokeWidth="3.400" /></g>,
  filter: <Funnel />,
  treeUp: <TreeLines />,
  treeDown: <TreeLines down />,
  broom: <g><path d="M3 25l10-15 13-1 6 12-16 23L2 40z" fill="#ffd91a" /><path d="M3 25l6-9 15 16-6 8z" fill="#6ba2d4" /><path d="M2 31l18 9-5 6L1 40z" fill="#f2242c" /><path d="M29 21L44 5" stroke="#e39a31" strokeWidth="6.500" strokeLinecap="round" /><path d="M22 18l16 14-13 13-9-17z" fill="#e4ac5a" stroke="#b0782b" strokeWidth="1.500" /></g>,
  group: <g fill="none" stroke="#85857d" strokeWidth="2.600"><path d="M3 27v17h24M9 18v20h23M17 12v19h22V7H17z" /><path d="M30 33V8c0-8-9-8-9 0v18c0 5 7 5 7 0V10" stroke="#3f6a93" /><g stroke="none"><PlusBadge /></g></g>,
  eye: <g><path d="M1 27C12 13 34 12 46 29 32 43 14 42 1 27z" fill="#f3f3f0" stroke="#888" strokeWidth="2" /><path d="M2 16C14 4 34 5 44 12" fill="none" stroke="#888" strokeWidth="2" /><circle cx="24" cy="25" r="11.500" fill={B} stroke="#3f6f9f" strokeWidth="1.500" /><circle cx="24" cy="24" r="5" fill="#111" /><circle cx="21" cy="20" r="2" fill="#fff" /></g>,
  exprFilter: <g><T x="14" y="30" fontSize="58" fontFamily="Liberation Serif,serif" stroke="#6c3a78" strokeWidth=".8" fill="#6c3a78">ε</T><path d="M25 25h22v20h-7V31l-2-2h-4l-2 2v14h-7z" fill="#a0a09a" /></g>,
  exprSel: <g><path d="M18 16h28v28H18z" fill={Y} stroke={YB} strokeWidth="2" /><T x="13" y="30" fontSize="58" fontFamily="Liberation Serif,serif" stroke="#6c3a78" strokeWidth=".8" fill="#6c3a78">ε</T></g>,
  selectAll: <g fill={Y} stroke={YB} strokeWidth="2"><path d="M4 5h40v10H4zM4 19h40v10H4zM4 33h40v10H4z" /></g>,
  invert: <g strokeWidth="2"><path d="M4 5h39v39z" fill="#eee" stroke="#999" /><path d="M4 8l36 35H4z" fill={Y} stroke={YB} /></g>,
  deselSmall: <g><path d="M4 5h26v26H4z" fill={Y} stroke={YB} strokeWidth="2" /><NoBadge /></g>,
  moveTop: <g><GridSheet /><path d="M6 34h36v8H6z" fill={Y} stroke={YB} strokeWidth="2" /><path d="M24 6l8 9h-5v18h-6V15h-5z" fill={B} stroke={BD} strokeWidth="1.500" /></g>,
  panTo: <g><path d="M5 5h30v30H5z" fill={Y} stroke={YB} strokeWidth="2" /><FourArrows /></g>,
  zoomTo: <g><path d="M6 5h26v28H6z" fill={Y} stroke={YB} strokeWidth="2" /><Lens x={30} y={17} /></g>,
  newField: <g><GridSheet /><path d="M5 3h13v42H5z" fill="#d8cb66" stroke="#887" strokeWidth="2" /><StarBadge /></g>,
  delField: <g><GridSheet /><path d="M7 3h13v42H7z" fill="#e99" stroke="#a55" strokeWidth="2" /><rect x="26" y="27" width="20" height="20" rx="3" fill="#c55" /><path d="M31 32l10 10M41 32L31 42" stroke="#fff" strokeWidth="3" /></g>,
  editField: <g><GridSheet /><Pencil c="#ea6a1e" d="#a33d08" /></g>,
  multi: <g strokeWidth="2"><path d="M5 5h38v9H5z" fill="#fff" stroke="#999" /><path d="M20 9.500h16" stroke="#666" strokeWidth="3" /><path d="M5 18h38v11H5z" fill="#9fe09f" stroke="#4a9a4a" /><path d="M20 23.500h16" stroke="#486" strokeWidth="3" /><path d="M5 33h38v10H5z" fill="#fff" stroke="#999" /><path d="M17 38h20" stroke="#f99" strokeWidth="3" /><path d="M11 38h5" stroke="#c00" strokeWidth="4" /></g>,
  gear: <g><circle cx="20" cy="20" r="17" fill="#e8e8e8" stroke="#777" strokeWidth="4.500" strokeDasharray="6.500 2.400" /><circle cx="20" cy="20" r="16" fill="#eee" stroke="#bbb" /><circle cx="20" cy="20" r="10" fill={B} stroke={BD} /><path d="M17 14l8 6-8 6z" fill="#fff" /><Cursor x={26} y={23} /></g>,
  dock: <g><path d="M9 4h33v36H9z" fill="#fff" stroke="#888" strokeWidth="2" /><path d="M8 3h35v9H8z" fill="#666" /><path d="M5 20h29v25H5z" fill="#eef5fb" stroke={B} strokeWidth="2" /><path d="M5 20h29v6H5z" fill="#8dbce4" /><path d="M9 31h7M20 31h10M9 36h7M20 36h10M9 41h7M20 41h10" stroke={B} strokeWidth="2.600" /></g>,
  sheet: <GridSheet />,
  form: <g><path d="M5 4h38v40H5z" fill="#e8f0f8" stroke={B} strokeWidth="2" /><path d="M10 15h9M10 33h9" stroke="#245" strokeWidth="5" /><path d="M22 10h15v10H22zM22 28h15v10H22z" fill="#fff" stroke={B} strokeWidth="2.400" /></g>,
  actionGrid: <g><path d="M4 4h34v9H4zM4 18h40v22H4z" fill="#ddd" stroke="#777" strokeWidth="2" /><path d="M4 17h40v7H4z" fill="#aa8" /><path d="M9 30h6M19 30h8M9 36h6M19 36h8" stroke="#777" strokeWidth="2.500" /><path d="M28 25h18v20H28z" fill="#997" /></g>,
  folderGrey: <path d="M4 4h15l3 6h22v33H4z" fill="#ededea" stroke="#8a8a82" strokeWidth="2.600" />,
  home: <g><path d="M4 4h15l3 6h22v33H4z" fill="#ededea" stroke="#8a8a82" strokeWidth="2.600" /><path d="M12 30l12-13 12 13h-5v8H18v-8z" fill="none" stroke="#444" strokeWidth="3" /></g>,
  fav: <path d="M24 1l6.500 15.500L46 18 34 28.500 38 46 24 36.500 10 46l4-17.500L2 18l15.500-1.500z" fill="#fff45f" stroke="#dcae0d" strokeWidth="2.600" />,
  pg: <g fill="#5f97c8" stroke="#35607f" strokeWidth="2.400"><path d="M15 3C6 1 0 6 2 16c2 9 5 17 10 16l4-5" /><path d="M33 3c9-2 15 3 13 13-1 7-5 12-8 14 2 2 5 1 8 0-3 6-8 5-12 3" /><path d="M15 6c5-5 15-5 19 0 4 6 3 14 1 20-2 6 0 14-5 19-3 2-6 1-7-3V31c-5 1-9-3-9-9 0-5-1-11 1-16z" /><path d="M18 12c3-2 6 1 5 7s0 9 1 11M31 12c-3 0-4 3-3 7" fill="none" /></g>,
  hana: <g><path d="M9 9h31v31H9z" fill={B} /><path d="M10 2.500h30M10 45.500h30M2.500 10v30M46 10v30" stroke={BD} strokeWidth="4" strokeDasharray="4 4.500" /></g>,
  mssql: <g fill="#5f97c8" stroke="#35607f" strokeWidth="2"><path d="M2 2c18 2 36 8 44 22-14 2-30 8-43 20C11 32 10 14 2 2z" /><path d="M14 4c8 10 8 22 2 33M25 8c6 8 6 17 2 22M35 13c4 4 4 10 2 14" fill="none" /></g>,
  oracle: <rect x="2.500" y="8" width="43" height="31" rx="12" fill="#5f97c8" stroke="#35607f" strokeWidth="4" />,
  wms: <g><Globe cx={24} cy={24} r={22} /><path d="M2 24h44M24 2v44M6 12h36M12 5c-6 12-6 26 0 38M36 5c6 12 6 26 0 38" stroke="#d9e8f5" strokeWidth="1.500" fill="none" /></g>,
};
const Ico = ({ n, s = 48 }) => <svg width={s} height={s} viewBox="0 0 48 48" fill="none">{icons[n]}</svg>;
const Chevrons = () => <svg width="16" height="16" viewBox="0 0 16 16" fill="none" stroke="#4a4a4a" strokeWidth="2.200"><path d="M1.500 2.500l4.500 5.500-4.500 5.500M9 2.500l4.500 5.500L9 13.500" /></svg>;
const FloatIcon = () => <svg width="22" height="22" viewBox="0 0 22 22" fill="none" stroke="#7a7671" strokeWidth="1.700"><rect x="1" y="1" width="20" height="20" rx="3.500" strokeWidth="2" /><rect x="9" y="5" width="8" height="8" rx="1" /><path d="M9 9H6a1 1 0 0 0-1 1v6a1 1 0 0 0 1 1h6a1 1 0 0 0 1-1v-3" /></svg>;
const CloseIcon = () => <svg width="22" height="22" viewBox="0 0 22 22" fill="none" stroke="#6f6b66"><rect x="1" y="1" width="20" height="20" rx="3.500" strokeWidth="2" /><path d="M6 6l10 10M16 6L6 16" strokeWidth="4" /></svg>;
const Tick = () => <svg width="20" height="22" viewBox="0 0 20 22" fill="none" stroke="#1d1d1d" strokeWidth="3.400"><path d="M3 12l5 6.500L17.500 2.500" /></svg>;

/* ---------- map ---------- */
let seed = 20;
const rnd = () => { seed = (seed * 1664525 + 1013904223) >>> 0; return seed / 4294967296; };
const gauss = () => (rnd() + rnd() + rnd() - 1.5) / 0.9;
const HOT = [
  [450, 500, 30, 3], [460, 440, 20, 2], [490, 570, 60, 8], [530, 500, 45, 5], [570, 590, 70, 4],
  [280, 600, 45, 6], [370, 660, 55, 7], [400, 700, 55, 8], [330, 700, 35, 9], [400, 770, 45, 9], [495, 680, 32, 6], [545, 730, 32, 8], [605, 775, 25, 6],
  [440, 820, 30, 6], [430, 880, 40, 8], [380, 820, 35, 6], [710, 860, 35, 14], [665, 830, 35, 8], [750, 890, 35, 10], [790, 935, 35, 12], [830, 970, 28, 8], [720, 930, 35, 8],
  [580, 1045, 30, 9], [580, 1090, 28, 9], [610, 1140, 25, 9], [820, 1080, 38, 14], [780, 1030, 25, 8], [870, 1100, 35, 7], [710, 1220, 30, 7], [600, 1190, 30, 6], [800, 1250, 45, 8],
  [940, 1190, 40, 12], [1065, 1215, 40, 14], [1000, 1300, 110, 9], [1090, 1310, 55, 9], [1190, 1310, 38, 12], [1220, 1270, 40, 5], [1210, 1345, 30, 10], [1090, 1440, 45, 14], [1140, 1400, 55, 5], [1315, 1470, 30, 8], [600, 740, 80, 2],
];
const cellLimit = (x, y, base) => {
  let d = 1;
  for (const [hx, hy, r, k] of HOT) d += k * Math.exp(-((x - hx) ** 2 + (y - hy) ** 2) / (r * r));
  return base / d;
};
const areaOf = (p) => Math.abs(p.reduce((s, [x, y], i) => { const [a, b] = p[(i + 1) % p.length]; return s + x * b - a * y; }, 0)) / 2;
const halfPlane = (p, cx, cy, nx, ny) => {
  const out = [], cuts = [];
  p.forEach((a, i) => {
    const b = p[(i + 1) % p.length];
    const da = (a[0] - cx) * nx + (a[1] - cy) * ny, db = (b[0] - cx) * nx + (b[1] - cy) * ny;
    if (da >= 0) out.push(a);
    if ((da >= 0) !== (db >= 0)) { const t = da / (da - db), q = [a[0] + (b[0] - a[0]) * t, a[1] + (b[1] - a[1]) * t]; out.push(q); cuts.push(q); }
  });
  return [out, cuts];
};
const wobble = (a, b) => {
  const len = Math.hypot(b[0] - a[0], b[1] - a[1]), n = Math.max(2, Math.round(len / 10));
  let s = `M${a[0].toFixed(1)} ${a[1].toFixed(1)}`, off = 0;
  const nx = -(b[1] - a[1]) / len, ny = (b[0] - a[0]) / len, bow = (rnd() - .5) * len * .1;
  for (let i = 1; i < n; i++) {
    off = off * .5 + (rnd() - .5) * Math.min(5, len * .08);
    const t = i / n, e = off + bow * Math.sin(Math.PI * t);
    s += `L${(a[0] + (b[0] - a[0]) * t + nx * e).toFixed(1)} ${(a[1] + (b[1] - a[1]) * t + ny * e).toFixed(1)}`;
  }
  return s + `L${b[0].toFixed(1)} ${b[1].toFixed(1)}`;
};
const lines = [];
const subdivide = (p, base, depth = 0) => {
  if (p.length < 3 || depth > 12) return;
  const cx = p.reduce((s, q) => s + q[0], 0) / p.length, cy = p.reduce((s, q) => s + q[1], 0) / p.length;
  const A = areaOf(p);
  if (A < cellLimit(cx, cy, base) * (.5 + rnd() * 1.1) || A < 80) return;
  let far = 0, ang = 0;
  p.forEach((a, i) => p.forEach((b, j) => { if (j > i) { const d = Math.hypot(a[0] - b[0], a[1] - b[1]); if (d > far) { far = d; ang = Math.atan2(b[1] - a[1], b[0] - a[0]); } } }));
  ang += (rnd() - .5) * .7;
  const nx = Math.cos(ang), ny = Math.sin(ang), ox = cx + (rnd() - .5) * far * .2 * nx, oy = cy + (rnd() - .5) * far * .2 * ny;
  const [l, cuts] = halfPlane(p, ox, oy, nx, ny), [r] = halfPlane(p, ox, oy, -nx, -ny);
  if (cuts.length >= 2) lines.push(wobble(cuts[0], cuts[1]));
  subdivide(l, base, depth + 1); subdivide(r, base, depth + 1);
};
const pts = (s) => s.split(" ").map(q => q.split(",").map(Number));
[
  ["230,545 400,560 330,720 240,650", 3200], ["390,390 480,380 520,470 560,560 400,560 400,460", 3800],
  ["520,480 600,490 680,650 560,660 560,560", 2200], ["400,560 560,560 560,760 430,760 320,740 330,560", 3200],
  ["560,660 640,640 720,740 700,800 560,780", 3000], ["320,740 470,760 480,860 450,950 380,840", 4500],
  ["470,760 700,800 800,870 800,1010 650,1010 470,940", 14000], ["570,1015 880,1015 900,1060 880,1160 760,1225 600,1225 580,1100", 12000],
  ["850,1165 1010,1165 1010,1265 900,1260", 8000], ["1020,1150 1130,1150 1150,1250 1020,1260", 8000], ["880,1230 1000,1262 1120,1250 1150,1370 1060,1390 900,1320", 2000],
  ["1150,1250 1250,1230 1260,1380 1140,1380", 9000], ["1050,1380 1238,1380 1238,1510 1070,1515", 7500], ["1270,1440 1350,1440 1350,1490 1280,1500", 6000],
  ["770,1230 900,1235 900,1300 790,1290", 3600], ["310,240 365,240 370,340 330,340", 1500],
].forEach(([s, b]) => subdivide(pts(s), b));
const specks = (cx, cy, rx, ry, n, rot = 0) => {
  let s = ""; const c = Math.cos(rot), q = Math.sin(rot);
  for (let i = 0; i < n * 1.25; i++) {
    const u = gauss() * rx * .85, v = gauss() * ry * .85, x = cx + u * c - v * q - 3, y = cy + u * q + v * c - 3, w = 3 + rnd() * 7, h = 3 + rnd() * 7, k = (rnd() - .5) * 4;
    s += `M${x.toFixed(1)} ${y.toFixed(1)}l${w.toFixed(1)} ${k.toFixed(1)}l${(-k).toFixed(1)} ${h.toFixed(1)}l${(-w).toFixed(1)} ${(k / 2).toFixed(1)}z`;
  }
  return s;
};
const urban = [
  [338, 272, 12, 18, 36], [342, 310, 8, 20, 8], [80, 243, 8, 8, 14], [90, 222, 6, 10, 6], [415, 403, 8, 6, 14], [445, 500, 10, 8, 20], [458, 440, 7, 8, 10], [480, 585, 24, 24, 130, .3], [495, 560, 28, 22, 70, -.6], [520, 500, 16, 24, 26], [530, 560, 44, 12, 36], [275, 595, 28, 12, 44], [300, 630, 14, 26, 36],
  [318, 690, 10, 44, 80, -.2], [365, 690, 30, 38, 160, -.7], [400, 770, 34, 22, 160, .7], [350, 745, 24, 16, 60, .7], [425, 680, 20, 9, 34], [495, 680, 9, 30, 56], [542, 725, 16, 20, 70], [600, 777, 24, 7, 40, .3], [560, 755, 14, 16, 24], [560, 815, 9, 6, 10], [445, 825, 14, 12, 24], [380, 820, 18, 14, 26], [435, 875, 16, 26, 50], [405, 890, 8, 7, 16], [480, 855, 9, 6, 8],
  [712, 857, 22, 18, 100], [665, 828, 22, 9, 26], [745, 885, 22, 14, 40], [780, 930, 20, 14, 60], [725, 930, 18, 8, 30], [825, 970, 18, 12, 34], [668, 870, 5, 5, 8],
  [815, 1080, 20, 16, 80], [780, 1030, 6, 18, 16], [845, 1092, 18, 12, 20], [582, 1040, 7, 20, 18], [580, 1090, 9, 8, 18], [610, 1140, 9, 20, 30, -.4], [715, 1220, 20, 6, 26], [825, 1162, 12, 4, 10], [790, 1245, 22, 20, 44], [830, 1262, 46, 14, 90],
  [940, 1190, 18, 15, 54], [890, 1228, 26, 12, 60], [1063, 1215, 20, 15, 66], [1010, 1310, 80, 34, 200, .2], [1085, 1310, 30, 54, 170], [1075, 1265, 40, 12, 60], [1120, 1310, 18, 26, 34], [1185, 1308, 16, 16, 40, .6], [1215, 1335, 22, 8, 40, .8], [1090, 1430, 20, 44, 110], [1105, 1490, 24, 16, 90], [1100, 1400, 28, 18, 40], [1130, 1470, 22, 16, 26], [1310, 1480, 16, 10, 34], [1340, 1472, 6, 6, 8], [685, 537, 8, 9, 20], [655, 465, 20, 4, 16], [1235, 1270, 14, 7, 10], [1190, 1270, 10, 14, 10], [75, 85, 14, 6, 8], [303, 97, 4, 4, 6], [585, 570, 24, 20, 24], [285, 520, 20, 10, 14], [640, 680, 20, 10, 8], [740, 785, 12, 10, 6], [1095, 1155, 18, 8, 10],
].map(a => specks(...a)).join("");
const coast = "60,55 72,78 52,70 43,80 70,96 84,128 80,150 70,156 78,170 72,185 77,205 76,225 55,262 38,295 45,325 70,345 90,360 108,375 122,395 130,425 124,445 124,470 135,500 140,515 135,530 150,548 175,560 200,590 225,608 238,630 246,655 240,678 262,680 278,690 300,700 310,715 310,745 325,765 325,792 342,815 360,828 380,842 388,870 388,895 400,932 425,955 445,970 462,995 490,1030 515,1052 545,1075 545,1100 578,1120 582,1150 576,1190 580,1212 605,1228 640,1226 690,1236 745,1236 768,1248 790,1278 815,1288 850,1297 890,1294 903,1312 896,1325 915,1338 945,1335 975,1352 1012,1378 1048,1405 1060,1440 1064,1480 1080,1518";
const rest = "1090,1519 1240,1505 1340,1497 1450,1489 1466,1476 1471,1460 1464,1444 1444,1440 1440,1425 1443,1400 1437,1384 1447,1380 1455,1362 1463,1340 1466,1300 1475,1277 1494,1268 1519,1248 1512,1240 1485,1222 1478,1195 1468,1178 1447,1165 1447,1137 1420,1110 1300,1010 1070,820 985,755 850,648 690,528 679,520 679,56 470,55 340,53 170,54";
const north = [
  "M195 38L190 60 172 70 165 90 175 115 165 125 180 148M60 40L68 75M66 90L115 95 135 135M205 152L215 140 243 130 240 108 278 104 292 96 290 70 305 62 325 72 350 68 375 82M205 152L210 190 190 235 187 270M215 185L240 200 250 210 285 210 300 222 298 240 320 232",
  "M410 38L400 52 372 72 385 100 385 130 365 112 330 105 322 72M440 38L447 70 470 95 440 130 420 122 410 135 385 130M555 40L545 62 490 100 470 100H580M385 130L372 150 380 160 350 175 310 190 298 215M380 160L420 172 440 185M440 130L430 148 410 150 400 165 392 185M410 150L430 155 442 185M372 160L345 200 330 240 318 262 330 255",
  "M85 137L100 150 115 160 110 200 80 215M110 210L150 235 187 270M145 190L183 185 190 212 152 222z M90 250L130 265 190 272 230 275 255 285 290 280 305 262 298 235M60 290L100 300 130 290 190 310M60 310L100 330 150 335 190 350M80 350L110 345 190 370M85 375L120 345M115 400V370L140 362 150 380 145 405",
  "M293 290L298 330 283 350 300 365 298 410M210 412L230 510M300 410L318 460 312 495 275 498M300 330L330 310 355 270 370 248 400 250M285 350L320 348 350 340 400 335 570 325M660 385L620 392 600 375 575 395M575 328L585 345 600 350 590 375 620 365 628 350 625 327",
  "M465 190L440 225 430 260 400 270M525 190L520 220 535 260 530 275M540 190L550 225 565 240 570 260 588 290 575 302M440 290L500 280 535 270M440 312L500 290 605 302M425 320L440 375M390 372L440 378M410 345L440 340M430 270L410 265 395 290 420 325M410 345L385 370",
  "M605 290L690 280 695 265 722 270 728 295 705 300 710 325 700 350 660 372M728 295L740 315 770 320 780 312 803 320 800 345 740 350 705 345M803 335L853 335M715 345L740 335 760 355M740 352L765 365 750 405 745 420 700 400 680 405 600 430M765 365L810 385 832 420 830 460M680 405L665 420 690 430 710 425 740 440 755 460M600 430L590 470 575 490M590 395L600 430 650 485 660 470 690 455 730 462M545 440L555 410 580 390M440 378L450 400 480 398 520 430 530 435M455 400L445 440 465 450",
  "M620 38L640 70 620 90 632 120 630 152 690 155 708 170 712 185M820 38L803 55 808 90 803 130 815 160 820 187M743 128l6-5 6 4-6 6z",
  "M660 515L740 500 755 512M640 545L700 530M690 550L760 540 800 550 850 545M820 545L815 575 840 600M660 600L700 595 735 600 760 590 852 590M680 620L760 615 840 608M690 640L740 635 830 630M690 660L760 650 800 660 840 655M690 690L740 680 850 690M735 705L830 700 850 690M660 485L655 515 640 545M580 480L600 505 640 500M465 470L490 475 520 460M455 475L450 520M500 495L505 520 560 525M560 440L610 435",
  "M840 695L870 715 905 710 930 690 932 650M905 710L925 745 990 765 1010 800M800 775L850 725 870 715M1010 800L1040 785 1095 795 1080 765 1065 750M800 810L860 800 870 780 900 755 925 745M990 830L940 800 900 815 860 830 800 830M860 830L910 870 940 880M1000 850L940 910 890 965M1085 882L1095 925 1110 950 1080 985 1040 998 970 985M1035 835L1050 860 1030 870M960 930L1015 900 1020 935 950 960M770 720L830 710M760 740L800 750 820 720M740 780L790 800 860 800M890 820L880 860 905 880M800 880H905L870 930 800 890M1010 800L990 830 1000 850 1040 830",
  "M145 490L215 485 250 500 275 498 270 520 290 560 320 575M150 520L200 530 230 515 260 520M155 540L200 545 235 590 265 580M450 522V570M318 460L340 487M285 505L275 545 290 580M160 575L200 605 250 625 250 570M200 635L320 625 345 620M355 570L390 580 400 605M390 575L420 545 460 550 480 580 500 605M460 560L455 600M350 615L400 620 410 660 450 690M470 610L480 640 520 660M500 605L545 640M200 545L260 565 300 600M150 600L200 605M340 545L380 555M405 607L470 612",
];
const northBorders = "M84 135H150L152 152H205M193 272V410H303M305 445H432V410H460V448M570 325H655L660 385M605 187V325M730 462H852M755 512H852M700 530H852M840 650V695M340 522H450M340 487V600M400 605H500";
const borders = "M471 55V180M330 180H679M90 365H172M855 755H985M790 870H825V865H915M490 1013L1300 1011M652 1015V1048M747 950V1013M758 1150V1225M850 1165H1010M1018 1015V1165M1018 1095H1050M1075 1095H1118V1015M1010 1165V1265M1120 1285H1350L1355 1279 1475 1279M1085 1380H1240L1445 1382M1238 1380L1236 1505M405 752H470M453 752V692L410 690M620 870V915M745 960V1012";
const roads = [
  "M893 765L915 768 910 780 930 800 960 785 985 757M858 758L858 780 875 790 875 800 915 805 935 795 945 780M915 865L912 830 880 795M1065 820L1048 822 1035 880 1020 905 1020 930 1005 930 960 870 915 875M915 870L945 930 955 990 965 1000 968 1012M915 872L885 890 880 930 850 935M830 970L850 955 870 955 882 975 875 995 860 1000 830 980M815 930L830 910 850 910 855 930 835 940",
  "M652 1048L662 1060 775 1060M695 1065L700 1085 735 1110 730 1115 755 1125 750 1150 650 1130M727 1063L780 1110M747 985H810L815 1015 815 1085M815 1085L830 1150 850 1170 900 1260M758 1150L850 1165M825 1090L835 1155 895 1158M965 1060L960 1100 930 1140 895 1158M965 1065L1015 1060M977 1015L985 1045 1018 1050M1050 1095L1065 1075 1075 1095M1118 1040L1180 1042 1195 1055 1228 1075 1222 1085 1195 1118 1135 1115 1118 1090M1120 1095L1142 1120 1140 1150 1105 1150M1080 1155L1100 1135 1125 1140M875 1035L900 1020 930 1030 930 1048 960 1052M870 1060L880 1085 925 1100M920 1125L950 1130 968 1108 975 1122 940 1132",
  "M1420 1112V1145L1385 1152 1355 1180 1330 1210 1360 1235 1380 1255 1420 1280M1330 1212L1285 1210 1282 1200 1225 1195 1195 1180 1180 1190 1195 1220 1230 1245 1290 1240V1210M1180 1192L1140 1200 1130 1235 1160 1250M1238 1380L1215 1370 1180 1330M1230 1335L1245 1375 1280 1410 1320 1440M1235 1355L1260 1360 1295 1380M1240 1385L1275 1425 1310 1430M1280 1415L1310 1390 1320 1405 1330 1440 1350 1445M1310 1390L1345 1420 1350 1495M1447 1340L1435 1355 1430 1380M1466 1472L1435 1488M1442 1160L1430 1155 1435 1170 1455 1172M1515 1240L1480 1262 1478 1275M1180 1382V1425L1240 1425M1110 1165L1145 1195 1130 1235M1180 1240L1200 1270 1240 1260M1150 1240L1155 1300",
  "M470 760L500 740 530 770 475 798 470 780M500 815L505 855 550 865 595 860M485 830L505 825M540 815L600 810 620 870M680 912H620M620 870L655 860M555 865L590 895V945L640 1000M480 870L560 900 580 945 500 970M580 940L590 925 680 912M650 915L648 975M685 915L688 945 650 975 690 990 697 1013M640 985L660 975M600 1225L690 1230M645 1160C660 1150 690 1175 690 1190 680 1205 655 1195 655 1180M590 1085L650 1060M600 1120L660 1105M640 1150L645 1200M600 1200L650 1205 700 1200M440 900L500 940 560 945M450 940L520 965",
];
const islands = [
  "M224 706l12-6 20 14 0 12-12 2z", "M597 1273c14-8 30-4 38 6 14 0 26-2 36 0 20-4 14-10 30-6 26 2 36 6 50 10 14-4 26 0 28 6-4 8-20 10-36 6-22 6-48 14-66 14-26 6-44-6-50-18-18 2-30-10-30-18z",
  "M807 1369c4-9 16-8 19 0 2 10-6 14-12 12-6 0-9-6-7-12z", "M731 1402c10-8 30-6 38 4 2 8-4 14-12 14-12-1-26-8-26-18z", "M870 1367c16-7 40 0 52 14 10 12 10 20 2 24-12 4-24-2-32-12-14-8-24-14-22-26z", "M869 1435c6-6 18-2 24 8 10 10 22 20 30 30-2 10-16 12-24 8-16-10-22-22-30-46z",
];
const poly = (s) => "M" + s.split(" ").join("L");
const California = () => (
  <svg width="680" height="630" viewBox="0 0 1568 1568" preserveAspectRatio="none">
    <defs>
      <clipPath id="state"><path d={poly(coast + " " + rest) + "z"} /></clipPath>
      <filter id="meander" filterUnits="userSpaceOnUse" x="0" y="0" width="1568" height="1568">
        <feTurbulence type="fractalNoise" baseFrequency="0.05" numOctaves="2" seed="4" result="n" />
        <feDisplacementMap in="SourceGraphic" in2="n" scale="20" xChannelSelector="R" yChannelSelector="G" />
      </filter>
    </defs>
    <g stroke="#262a2b" strokeLinejoin="round">
      <path d={poly(coast + " " + rest) + "z"} fill="#7b8b8f" strokeWidth="4" />
      <g clipPath="url(#state)" fill="none">
        <path d={poly(coast)} transform="translate(9 -5)" strokeWidth="3" />
        <path d={borders} strokeWidth="3" />
        <path d={northBorders} transform="matrix(.7686 0 0 .8296 23.06 24.9)" strokeWidth="3.600" />
        <g filter="url(#meander)">
          <path d={lines.join("")} strokeWidth="2.900" />
          <path d={roads.join("")} strokeWidth="3.200" />
          <path d={north.join("")} transform="matrix(.7686 0 0 .8296 23.06 24.9)" strokeWidth="4" />
        </g>
        <path d={urban} strokeWidth="2.600" />
        <path fill="#232323" d="M872 1222l28 10 16-6 10 18 34 20 80-2 30 2 12 18 4 24-14 20 6 24-8 14-20-4-24-14-22 2 24 44-20-16-50-32-34-16-16-2-22-6-2-14 10-8-12-24zM460 578l20-12 6-26 18 22 10 8-18 14-4 22-16 10zM342 684l32-4 14 24 24 22-12 10-36-20-20-14zM372 756l28-4 28 26-8 16-24 2-22-22zM694 850l26-6 14 16-14 14-20-4zM1064 1410l22 4 12 30-6 22 18 28-14 18-18-4-8-30zM806 1074l16-2 10 12-16 8zM310 656l8 16 12 34-6 16-10-24z" />
        <g fill="#232323"><circle cx="1407" cy="1359" r="3" /><circle cx="1452" cy="1352" r="4" /><circle cx="625" cy="958" r="4" /><circle cx="502" cy="932" r="3" /><circle cx="360" cy="437" r="4" /><circle cx="366" cy="403" r="3" /><circle cx="416" cy="605" r="4" /></g>
      </g>
      {islands.map((d, i) => <path key={i} d={d} fill="#7b8b8f" strokeWidth="5" />)}
      <path d="M640 1292l14-12 14 6 10-4 8 12-18 14zM686 1280l20-6 36 8 8 8-30 10-32-4zM740 1408l12-4 10 6-8 6-10-2zM606 1278l18 4 6-4-2 10-14-2zM757 1290h14M814 1373h5M916 1392h4" fill="none" strokeWidth="4" />
    </g>
  </svg>
);

/* ---------- data ---------- */
const rows = [
  ["3837562", "0", "+34.1480383", "-118.5720594", "1983"],
  ["4472196", "0", "+34.1488008", "-118.5910495", "4826"],
  ["1152028", "0", "+34.1756961", "-118.5246446", "5946"],
  ["18372491", "0", "+37.0781624", "-122.0154263", "3745"],
  ["6474889", "0", "+37.0628452", "-122.0106243", "5004"],
  ["1171521", "1165471", "+36.9564718", "-121.9752387", "3741"],
];
const tree = [["/Volumes", "folderGrey", 1], ["Favorites", "fav"], ["Spatial Bookmarks", "bookmarks", 1], ["Home", "home", 1], ["/ (Macintosh HD)", "folderGrey", 1], ["GeoPackage", "box"], ["SpatiaLite", "feather"], ["PostgreSQL", "pg", 1], ["SAP HANA", "hana"], ["MS SQL Server", "mssql"], ["Oracle", "oracle"], ["WMS/WMTS", "wms"]];

const Tools = ({ names }) => names.split(" ").map((n, i) => {
  const dim = n.startsWith("~"), key = n.replace("~", "");
  return <Tool key={i} $dim={dim}><Ico n={key} /></Tool>;
});
const Small = ({ names, w = 47.9 }) => names.split(" ").map((n, i) => {
  if (n === "|") return <VSep key={i} $h={33} $m={6.1} />;
  const on = n.startsWith("!"), drop = n.endsWith("_");
  return <Tool key={i} $small $w={w} $dim={n.startsWith("~")} $on={on}><Ico n={n.replace(/[~!_]/g, "")} s={33} />{drop && <Corner $r={3} $b={5} />}</Tool>;
});

export default function App() {
  return (
    <Window>
      <Global />
      <TitleBar>
        <Lights><Light $c="#ff5f57" $b="#e2463f" /><Light $c="#febc2e" $b="#e0a029" /><Light $c="#28c840" $b="#1daa2f" /></Lights>
        <Title>*Untitled Project — QGIS [test1]</Title>
      </TitleBar>

      <Bar $h={73} $pb={1}>
        <Grip $w={20.3} />
        <Tools names="doc folder save newLayout layoutMgr style" />
        <Grip $ml={10} />
        <Tool $on><Ico n="hand" /></Tool>
        <Tools names="~panSel zoomIn zoomOut zoomFull ~zoomSel zoomLayer ~zoomNative zoomLast ~zoomNext newMap new3d newBm bookmarks clock refresh" />
        <Grip $ml={11} />
        <Tools names="select" /><Drop /><Tools names="selForm" /><Drop /><Tools names="deselect" /><Drop /><Tools names="selLoc" /><Drop />
        <Grip $ml={10} />
        <Tools names="identify abacus" />
        <More $auto $w={28}><Chevrons /></More>
      </Bar>

      <Bar $h={75}>
        <Grip $w={20.3} />
        <Tools names="dsm gpkg shp spatialite mem mesh virt" />
        <Grip $ml={10} />
        <Tool $dim><Ico n="pencils" /><Corner $r={6} $b={4} /></Tool>
        <Tools names="pencil ~saveEdit ~digitize" /><Drop />
        <Tools names="~polygonNew ~vertex" /><Drop />
        <Tools names="~modAttr ~del ~cut ~copy ~paste ~undo ~redo" />
        <Grip $ml={10} />
        <Tools names="label diagram" />
        <VSep $h={36} $m={3.5} />
        <Tool $w={60}><Ico n="labelBlue" /></Tool><Tool $w={60}><Ico n="labelRed" /></Tool>
        <More $w={36}><Chevrons /></More>
        <Grip $w={23} />
        <Tool><Ico n="web" /><Corner $r={8} $b={7} /></Tool>
        <More $w={34}><Chevrons /></More>
        <Grip $w={22} />
        <Tools names="python" />
        <More $w={32}><Chevrons /></More>
        <Grip $w={23} />
        <Tools names="help" />
        <Grip $ml={10} />
      </Bar>

      <Bar $h={75} $pt={2}>
        <Grip $w={20.3} />
        <Tools names="magnet" />
        <Tool $dim><Ico n="snapV" /><Corner $r={6} $b={6} /></Tool>
        <Tool $on><Ico n="snapSq" /><Corner $r={6} $b={6} /></Tool>
        <Spin $w={187} $ml={2} $plain $c="#b8b8b8" $pl={7} $fs={24}>12<SpinButtons /></Spin>
        <Combo $w={191} $ml={3} $c="#9a9a9a">px</Combo>
        <Tool $w={66}><Ico n="topo" /></Tool>
        <Tool><Ico n="overlap" /><Corner $r={6} $b={5} /></Tool>
        <Tools names="~crossX ~bolt" /><Drop $w={22} /><Tools names="~trace" />
        <Grip $ml={12} />
        <BarLabel>Select a basemap</BarLabel>
        <Combo $w={287} $ml={2}>OpenStreetMap</Combo>
        <Tools names="basemap" />
        <Grip $ml={11} />
        <Tools names="qms osm" />
      </Bar>

      <Body>
        <Left>
          <DockHead $h={38} $pl={4} $pr={3}>Browser<DockBtns><FloatIcon /><CloseIcon /></DockBtns></DockHead>
          <SmallBar $h={59} $pl={3}><Small w={48.1} names="addLayer refresh filter treeUp info" /></SmallBar>
          <TreeBox>
            <Tree>
              {tree.map(([t, ic, open]) => <Row key={t}><Tri $show={!!open} /><Ico n={ic} s={32} />{t}</Row>)}
            </Tree>
            <VScroll><ScrollBtn $v $d="up" /><Handle $v $s={209} /><Space /><ScrollBtn $v $d="down" /></VScroll>
          </TreeBox>
          <HSplit $h={12} $pl={2} />
          <DockHead $h={39} $pl={4} $pr={3}>Layers<DockBtns><FloatIcon /><CloseIcon /></DockBtns></DockHead>
          <SmallBar $h={59} $pl={3}>
            <Small w={48.1} names="broom group eye_ filter_ exprFilter" /><Drop $w={23} />
            <Small w={48.1} names="treeDown treeUp removeLayer" />
          </SmallBar>
          <LayerTree>
            <LayerRow><Check><Tick /></Check><Swatch /><LayerName>california_tract_with_pop</LayerName></LayerRow>
          </LayerTree>
          <HScroll $br><ScrollBtn $w={24} $d="left" /><Handle $s={396} /><Space /><ScrollBtn $w={28} $d="right" /></HScroll>
        </Left>
        <VSplit />
        <Right>
          <MapCanvas><California /></MapCanvas>
          <HSplit $h={14} $pl={5} />
          <DockHead $h={37} $pl={13} $pr={1} $ls={.18}>california_tract_with_pop — Features Total: 9129,Filtered: 9129,Selected: 0<DockBtns><FloatIcon /><CloseIcon /></DockBtns></DockHead>
          <SmallBar $h={59} $pl={6}>
            <Small names="pencil ~modAttr ~saveEdit refresh | ~actionGrid_ ~copy ~paste | exprSel selectAll invert deselSmall filter moveTop panTo zoomTo | ~newField ~delField editField abacus | multi | gear !dock" />
          </SmallBar>
          <Table>
            <TableMid>
              <GridArea>
                <HeadRow>
                  <HeadCell $w={209} $pl={20}>mtfcc</HeadCell>
                  {["funcstat", "aland", "awater", "intptlat", "intptlon"].map(h => <HeadCell key={h} $pl={2}>{h}</HeadCell>)}
                  <HeadCell><HeadClip $ls={.1} $pl={1}>geographic area name</HeadClip></HeadCell>
                  <HeadCell><HeadClip $ls={.1} $pl={11}>estimate!!total!!total population</HeadClip></HeadCell>
                </HeadRow>
                {rows.map((r, i) => (
                  <DataRow key={i} $alt={i % 2 === 1}>
                    <RowHead>{i + 1}</RowHead>
                    <Cell $w={142}><Pulled>G5020</Pulled></Cell>
                    <Cell>S</Cell>
                    <Cell $r>{r[0]}</Cell><Cell $r>{r[1]}</Cell><Cell>{r[2]}</Cell><Cell $ls={1.1}>{r[3]}</Cell>
                    <Cell $ls={.3}>Census Tract...</Cell><Cell $r>{r[4]}</Cell>
                  </DataRow>
                ))}
                <Highlight />
              </GridArea>
              <VScroll $w={27}><ScrollBtn $v $d="up" /><Handle $v $s={52} /><Space /><ScrollBtn $v $d="down" /></VScroll>
            </TableMid>
            <HScroll>
              <ScrollBtn $d="left" /><Handle $trough $s={728} /><Handle $s={772} /><ScrollBtn $d="right" /><ScrollCorner />
            </HScroll>
          </Table>
          <Footer>
            <ShowBtn><Ico n="sheet" s={31} />Show All Features<Corner $r={3} $b={5} /></ShowBtn>
            <Space />
            <Tool $small $w={46}><Ico n="form" s={31} /></Tool><Tool $small $on $w={47}><Ico n="sheet" s={31} /></Tool>
          </Footer>
        </Right>
      </Body>

      <Status>
        <Search><svg width="26" height="26" viewBox="0 0 26 26" fill="none" stroke="#888" strokeWidth="2.200"><circle cx="10.500" cy="10.500" r="8.500" /><path d="M17 17l8 8" /></svg>Type to locate (⌘K)</Search>
        <Clip $ml={16} $w={28}>To</Clip>
        <Clip $ml={16} $w={80}>Coordinate</Clip>
        <Field>33.56°,-110.17°</Field>
        <Spot $ml={7} $w={32}><svg width="30" height="32" viewBox="0 0 30 32" fill="#fff" stroke="#111" strokeWidth="2.200"><path d="M3 5c3-5 9-3 12 2l4 8c8 1 10 8 5 13-6 4-12 0-11-7L4 17C1 13 1 9 3 5z" /><path d="M6 6l9 13M10 4l8 12M4 12l8 7M17 22l5 1M20 3l6 1M22 9l6-3M2 22l5 2" /><circle cx="19" cy="23" r="2" fill="#111" /></svg></Spot>
        <Clip $ml={24} $w={28}>Scale</Clip>
        <Spin $w={177} $ml={5} $pl={5} $ls={.35}>1:5698533<ScaleDrop /></Spin>
        <Spot $ml={23} $w={26}><svg width="24" height="30" viewBox="0 0 24 30"><path d="M5 15V9a7 7 0 0 1 14 0v6" fill="none" stroke="#777" strokeWidth="3.500" /><rect x="0.500" y="13" width="23" height="16.500" rx="2" fill="#555" /></svg></Spot>
        <Clip $ml={14} $w={69}>Magnifier</Clip>
        <Spin $w={177} $ml={5}>100%<SpinButtons /></Spin>
        <Clip $ml={17} $w={56}>Rotation</Clip>
        <Spin $w={177} $ml={17} $ls={.4}>0.0 °<SpinButtons /></Spin>
        <Spot $ml={13} $w={27}><Check><Tick /></Check></Spot>
        <Clip $ml={8} $w={74} $ls={.25}>Render</Clip>
        <Spot $ml={29} $w={32}><svg width="30" height="27" viewBox="0 0 30 27" fill="none" stroke="#555" strokeWidth="1.600"><ellipse cx="15" cy="13.500" rx="13" ry="12.500" /><ellipse cx="15" cy="13.500" rx="6" ry="12.500" /><path d="M15 1v25M2 13.500h26M4 7c7 3 15 3 22 0M4 20c7-3 15-3 22 0" /><path d="M0 13C2 4 8 1 15 1s13 3 15 12z" fill="#555" fillOpacity=".45" /></svg></Spot>
        <Clip $ml={1} $w={121} $ls={.6}>EPSG:4269</Clip>
        <Spot $ml={43} $w={34}><svg width="34" height="30" viewBox="0 0 34 30"><path d="M17 1C7 1 2 6 2 12.500S8 24 17 24c2 0 4 0 5-.500 2 3 4 4 7 5-1-2-1-4-1-7 3-2 4-5 4-9C32 6 27 1 17 1z" fill="#4c4c4c" /><g fill="#fff"><circle cx="10" cy="12.500" r="2" /><circle cx="17" cy="12.500" r="2" /><circle cx="24" cy="12.500" r="2" /></g></svg></Spot>
        <SizeGrip />
      </Status>
    </Window>
  );
}
